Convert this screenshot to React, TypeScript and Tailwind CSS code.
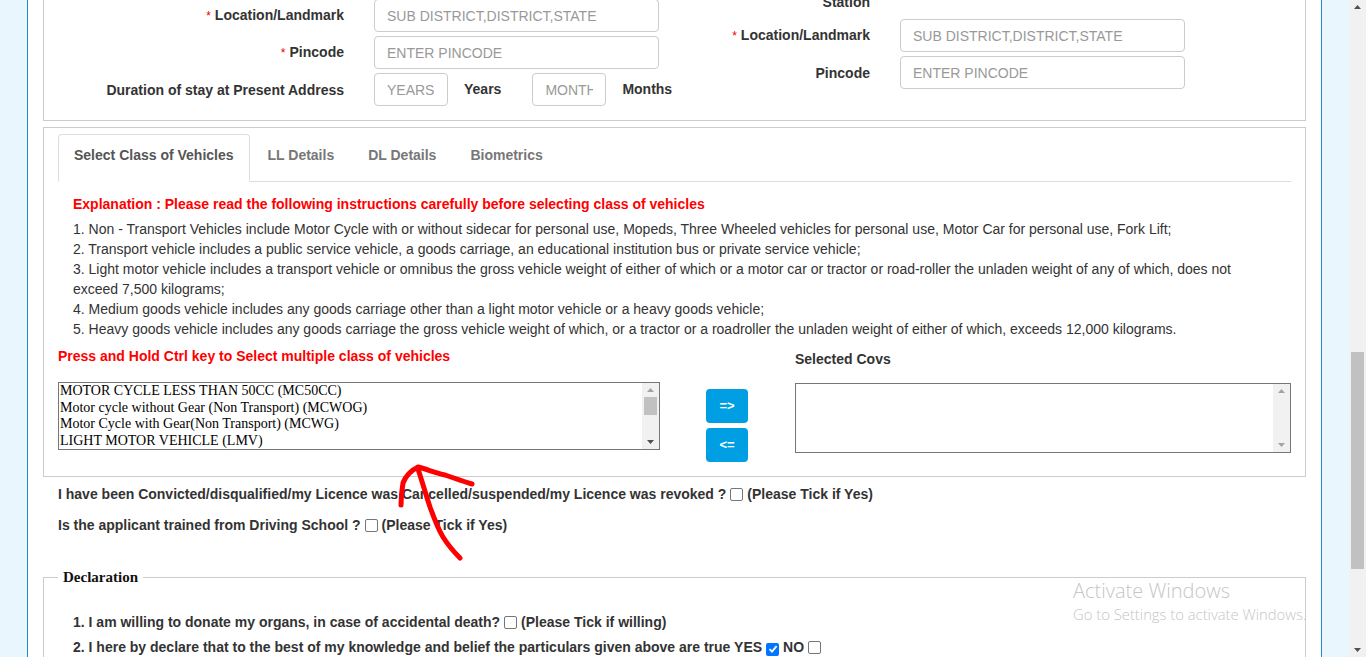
import React from 'react';

const SANS = "font-['Liberation_Sans',Arial,sans-serif]";

function Tri({ up, color }: { up?: boolean; color: string }) {
  return (
    <svg width="7" height="4" viewBox="0 0 7 4">
      <polygon points={up ? '3.5,0 7,4 0,4' : '0,0 7,0 3.5,4'} fill={color} />
    </svg>
  );
}

function FieldRow({
  label,
  required,
  placeholder,
  labelWidth,
}: {
  label: string;
  required?: boolean;
  placeholder: string;
  labelWidth: string;
}) {
  return (
    <div className="flex items-center">
      <div className={`shrink-0 whitespace-nowrap text-right font-bold leading-[20px] ${labelWidth}`}>
        {required && <span className="mr-[4px] text-[12px] font-normal text-[#e00]">*</span>}
        {label}
      </div>
      <input
        placeholder={placeholder}
        className="ml-[30px] h-[33px] w-[285px] shrink-0 rounded-[4px] border border-[#ccc] px-[12px] text-[14px] placeholder:text-[#999]"
      />
    </div>
  );
}

function Check({ checked }: { checked?: boolean }) {
  if (checked) {
    return (
      <span className="mx-[4px] inline-flex h-[13px] w-[13px] items-center justify-center rounded-[2px] bg-[#0075ff] align-[-2px]">
        <svg width="10" height="10" viewBox="0 0 10 10">
          <polyline points="1.5,5.2 4,7.6 8.6,2.2" fill="none" stroke="#fff" strokeWidth="1.8" />
        </svg>
      </span>
    );
  }
  return <span className="mx-[4px] inline-block h-[13px] w-[13px] rounded-[2px] border border-[#767676] bg-white align-[-2px]" />;
}

function ListBox({ items, thumb, height }: { items: string[]; thumb?: boolean; height: string }) {
  return (
    <div className={`flex border border-[#767676] bg-white ${height}`}>
      <div className="flex-1 overflow-hidden pl-[1px] font-['Liberation_Serif','Times_New_Roman',serif] text-[14px] leading-[16.5px] text-black">
        {items.map((it) => (
          <div key={it} className="whitespace-nowrap">{it}</div>
        ))}
      </div>
      <div className="flex w-[17px] flex-col items-center bg-[#f1f1f1]">
        <div className="flex h-[14px] items-center">
          <Tri up color="#a3a3a3" />
        </div>
        {thumb && <div className="h-[18px] w-[13px] bg-[#c1c1c1]" />}
        <div className="mt-auto flex h-[14px] items-center">
          <Tri color={thumb ? '#505050' : '#a3a3a3'} />
        </div>
      </div>
    </div>
  );
}

const RULES = [
  '1. Non - Transport Vehicles include Motor Cycle with or without sidecar for personal use, Mopeds, Three Wheeled vehicles for personal use, Motor Car for personal use, Fork Lift;',
  '2. Transport vehicle includes a public service vehicle, a goods carriage, an educational institution bus or private service vehicle;',
  '3. Light motor vehicle includes a transport vehicle or omnibus the gross vehicle weight of either of which or a motor car or tractor or road-roller the unladen weight of any of which, does not exceed 7,500 kilograms;',
  '4. Medium goods vehicle includes any goods carriage other than a light motor vehicle or a heavy goods vehicle;',
  '5. Heavy goods vehicle includes any goods carriage the gross vehicle weight of which, or a tractor or a roadroller the unladen weight of either of which, exceeds 12,000 kilograms.',
];

const COVS = [
  'MOTOR CYCLE LESS THAN 50CC (MC50CC)',
  'Motor cycle without Gear (Non Transport) (MCWOG)',
  'Motor Cycle with Gear(Non Transport) (MCWG)',
  'LIGHT MOTOR VEHICLE (LMV)',
];

const TABS = ['Select Class of Vehicles', 'LL Details', 'DL Details', 'Biometrics'];

export default function App() {
  return (
    <div className={`flex h-[657px] w-[1366px] overflow-hidden bg-[#eaf6fd] text-[14px] text-[#333] ${SANS}`}>
      <div className="relative flex-1 px-[27px]">
        <div className="flow-root h-full border-x border-[#1b8dcf] bg-white px-[15px]">
          <div className="-mt-[54px]">
            {/* present address panel */}
            <div className="flex border border-[#ccc] pt-[15px] pb-[14px]">
              <div className="flex w-[646px] shrink-0 flex-col gap-[4px]">
                <FieldRow label="Village/Town" required placeholder="VILLAGE/TOWN" labelWidth="w-[300px]" />
                <FieldRow label="Location/Landmark" required placeholder="SUB DISTRICT,DISTRICT,STATE" labelWidth="w-[300px]" />
                <FieldRow label="Pincode" required placeholder="ENTER PINCODE" labelWidth="w-[300px]" />
                <div className="flex items-center whitespace-nowrap">
                  <div className="w-[300px] shrink-0 text-right font-bold leading-[20px]">Duration of stay at Present Address</div>
                  <input
                    placeholder="YEARS"
                    className="ml-[30px] h-[33px] w-[74px] shrink-0 rounded-[4px] border border-[#ccc] px-[12px] text-[14px] placeholder:text-[#999]"
                  />
                  <span className="ml-[16px] font-bold">Years</span>
                  <input
                    placeholder="MONTH"
                    className="ml-[31px] h-[33px] w-[74px] shrink-0 rounded-[4px] border border-[#ccc] px-[12px] text-[14px] placeholder:text-[#999]"
                  />
                  <span className="ml-[16px] font-bold">Months</span>
                </div>
              </div>
              <div className="flex flex-col gap-[4px]">
                <div className="flex h-[53px] w-[180px] flex-col items-end justify-end pb-[3px] font-bold leading-[20px]">
                  <div>Police</div>
                  <div>Station</div>
                </div>
                <FieldRow label="Location/Landmark" required placeholder="SUB DISTRICT,DISTRICT,STATE" labelWidth="w-[180px]" />
                <FieldRow label="Pincode" placeholder="ENTER PINCODE" labelWidth="w-[180px]" />
              </div>
            </div>

            {/* class of vehicles panel */}
            <div className="mt-[6px] border border-[#ccc] px-[14px] pt-[6px] pb-[14px]">
              <div className="flex border-b border-[#ddd]">
                {TABS.map((t, i) => (
                  <div
                    key={t}
                    className={`-mb-px mr-[2px] h-[48px] rounded-t-[4px] border px-[15px] pt-[10px] font-bold leading-[20px] ${
                      i === 0 ? 'border-[#ddd] border-b-white bg-white text-[#555]' : 'border-transparent text-[#777]'
                    }`}
                  >
                    {t}
                  </div>
                ))}
              </div>
              <div className="px-[15px] pt-[12px] leading-[20px]">
                <div className="font-bold text-[#f00]">
                  Explanation : Please read the following instructions carefully before selecting class of vehicles
                </div>
                <div className="mt-[5px]">
                  {RULES.map((r) => (
                    <div key={r}>{r}</div>
                  ))}
                </div>
              </div>
              <div className="mt-[7px] flex">
                <div className="w-[602px] shrink-0">
                  <div className="font-bold leading-[20px] text-[#f00]">Press and Hold Ctrl key to Select multiple class of vehicles</div>
                  <div className="mt-[16px]">
                    <ListBox items={COVS} thumb height="h-[68px]" />
                  </div>
                </div>
                <div className="ml-[46px] mt-[43px] flex w-[42px] shrink-0 flex-col gap-[5px]">
                  <button className="h-[34px] rounded-[4px] bg-[#009fe3] text-[13px] font-bold text-white">=&gt;</button>
                  <button className="h-[34px] rounded-[4px] bg-[#009fe3] text-[13px] font-bold text-white">&lt;=</button>
                </div>
                <div className="ml-[47px] flex-1 pt-[3px]">
                  <div className="font-bold leading-[20px]">Selected Covs</div>
                  <div className="mt-[14px]">
                    <ListBox items={[]} height="h-[70px]" />
                  </div>
                </div>
              </div>
            </div>

            <div className="mt-[7px] px-[15px] font-bold leading-[20px]">
              I have been Convicted/disqualified/my Licence was Cancelled/suspended/my Licence was revoked ?
              <Check />
              (Please Tick if Yes)
            </div>
            <div className="mt-[11px] px-[15px] font-bold leading-[20px]">
              Is the applicant trained from Driving School ?
              <Check />
              (Please Tick if Yes)
            </div>

            <fieldset className="mt-[32px] border border-[#ccc] px-[14px] pb-[20px]">
              <legend className="px-[5px] font-['Liberation_Serif','Times_New_Roman',serif] text-[15px] font-bold leading-[20px] text-[#111]">
                Declaration
              </legend>
              <div className="mt-[25px] px-[15px] font-bold leading-[20px]">
                1. I am willing to donate my organs, in case of accidental death?
                <Check />
                (Please Tick if willing)
              </div>
              <div className="mt-[5px] px-[15px] font-bold leading-[20px]">
                2. I here by declare that to the best of my knowledge and belief the particulars given above are true YES
                <Check checked />
                NO
                <Check />
              </div>
            </fieldset>
          </div>
        </div>

        {/* windows watermark */}
        <div className="pointer-events-none absolute left-[1073px] top-[578px] font-['Open_Sans',sans-serif] font-light text-[#c6c6c6]">
          <div className="text-[20px] leading-[26px]">Activate Windows</div>
          <div className="text-[14.8px] leading-[20px]">Go to Settings to activate Windows.</div>
        </div>

        {/* hand drawn arrow */}
        <svg className="pointer-events-none absolute left-[390px] top-[455px]" width="100" height="115" viewBox="0 0 100 115">
          <path
            d="M11 50 C11 42 12 34 13 28 C16 20 22 15 28 12 M28 12 C36 14 46 18 55 20 C64 23 72 26 82 29 M28 14 C32 26 36 40 40 52 C44 63 48 74 53 82 C58 90 64 97 70 103"
            fill="none"
            stroke="#f00"
            strokeWidth="5"
            strokeLinecap="round"
            strokeLinejoin="round"
          />
        </svg>
      </div>

      {/* page scrollbar */}
      <div className="flex h-[657px] w-[17px] flex-col items-center bg-[#f1f1f1]">
        <div className="flex h-[14px] items-center">
          <Tri up color="#505050" />
        </div>
        <div className="mt-[338px] h-[217px] w-[13px] bg-[#c1c1c1]" />
        <div className="mt-auto flex h-[14px] items-center">
          <Tri color="#505050" />
        </div>
      </div>
    </div>
  );
}
